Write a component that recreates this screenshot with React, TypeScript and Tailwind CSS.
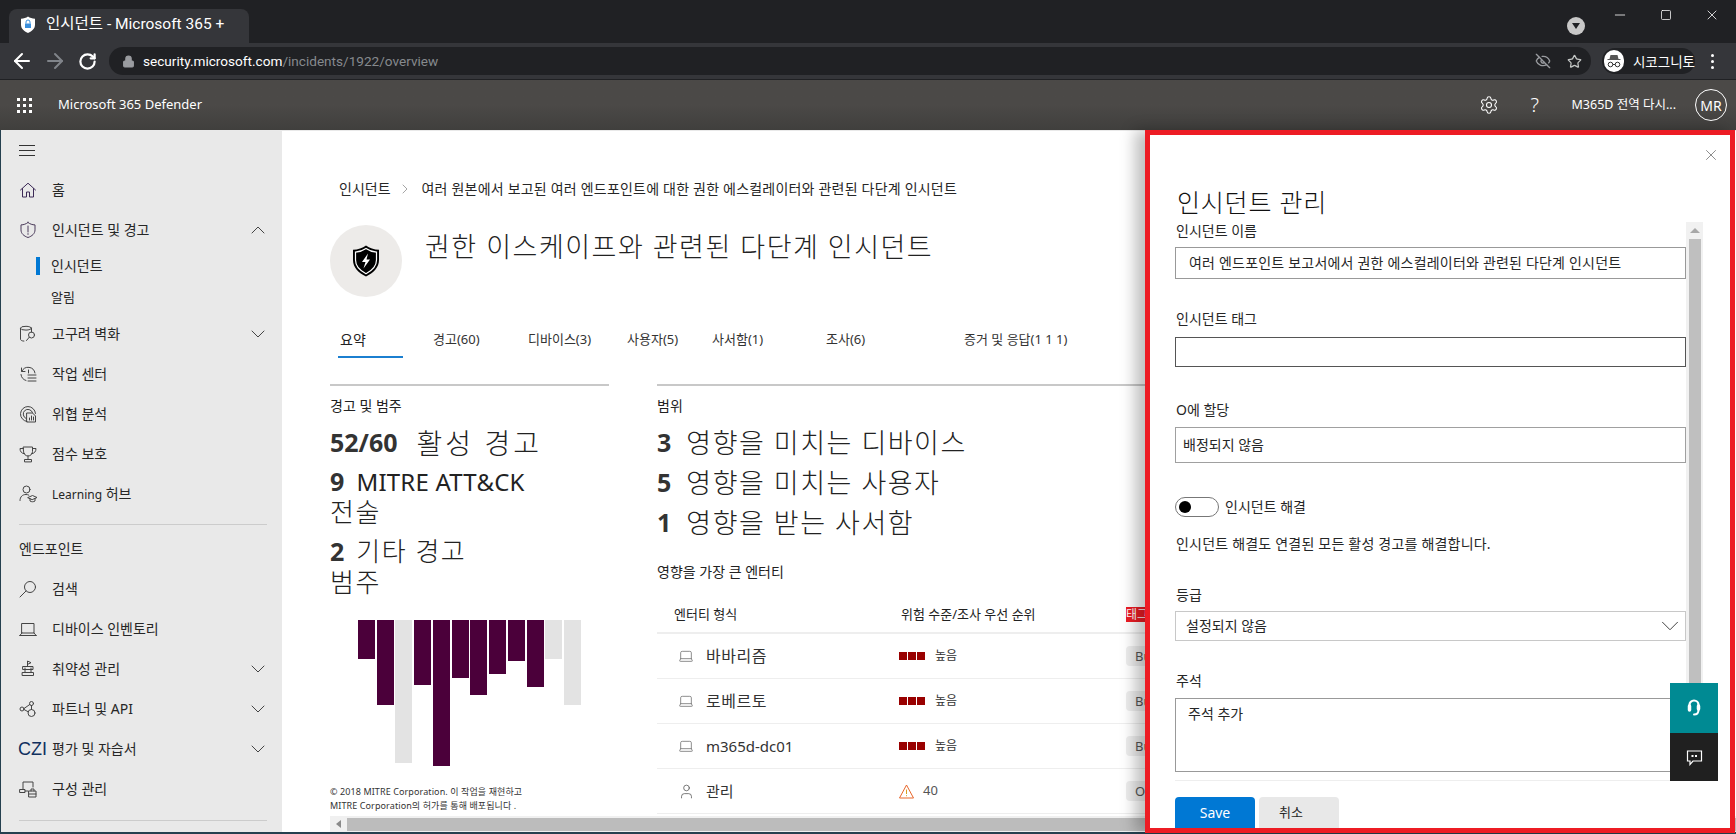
import React from "react";
import { ChevronDown, ChevronUp, ChevronRight, ArrowLeft, ArrowRight, RotateCw, Lock, EyeOff, Star, Settings, X, Minus, Square, Laptop, User } from "lucide-react";

const I = ({ children, s = 18 }: { children: React.ReactNode; s?: number }) => (
  <svg width={s} height={s} viewBox="0 0 18 18" fill="none" stroke="#444" strokeWidth="1" strokeLinecap="round" strokeLinejoin="round">{children}</svg>
);

const icons: Record<string, React.ReactNode> = {
  home: <I><path d="M1.500 9 9 2.200 16.500 9" stroke="#3d2a57" /><path d="M3.500 7.500V16h4v-5h3v5h4V7.500" stroke="#3d2a57" /></I>,
  shield: <I><path d="M9 1.500c2 1.600 4.300 2.300 7 2.400v5c0 3.600-2.800 6.200-7 7.600-4.200-1.400-7-4-7-7.600v-5c2.700-.1 5-.8 7-2.400Z" stroke="#4a3a5a" /><path d="M9 5v6M9 12.600v.8" stroke="#4a3a5a" /></I>,
  db: <I><ellipse cx="7" cy="3.200" rx="5.500" ry="1.900" /><path d="M1.500 3.200v11c0 1 1.300 1.800 3.400 1.900M12.500 3.200v4" /><circle cx="12.500" cy="10" r="3" /><path d="M10.300 12.200 7.500 15.500" /></I>,
  history: <I><path d="M2.500 3v3.500H6" /><path d="M2.800 6.300A7 7 0 0 1 16 8" /><path d="M2 9.500a7 7 0 0 0 5 6" /><path d="M9 10h8M9 13h8M9 16h8M9.500 5v3" /></I>,
  radar: <I><path d="M8 16.500a7.500 7.500 0 1 1 8.500-8" /><path d="M7 13.500a4.800 4.800 0 1 1 6.500-6" /><path d="M8 8h5.500l3 3v6H8Z" /><path d="M10.500 15v-2M12.500 15v-4M14.500 15v-3" /></I>,
  trophy: <I><path d="M4.500 2h9v4.500a4.500 4.500 0 0 1-9 0Z" /><path d="M4.500 3.500H1c0 3 1.500 5 4.500 5.300M13.500 3.500H17c0 3-1.500 5-4.500 5.300M9 11v3M5.500 16.500v-2h7v2Z" /></I>,
  learn: <I><circle cx="7.500" cy="4.500" r="3.500" /><path d="M1 15.500c0-3.800 2.500-6 6-6 1 0 2 .2 2.800.6" /><path d="m9 12.500 4.500-2 4.500 2-4.500 2Z" /><path d="M11 13.500V16c1.500 1 3.500 1 5 0v-2.500" /></I>,
  search: <I><circle cx="11" cy="7" r="5.500" /><path d="M7 11 1 17" /></I>,
  laptop: <I><path d="M3 3.500h12v9.500H3ZM.8 15.500h16.400M.8 15.500 3 13M17.200 15.500 15 13" /></I>,
  vuln: <I><path d="M8.500 6V1l3.500 1.700L8.500 4.400" /><path d="M4 6.500h10v3H4ZM6 9.500v3M12 9.500v3M3.500 12.500h11v3h-11ZM6 8v1M12 8v1" /></I>,
  api: <I><circle cx="3" cy="9" r="2" /><circle cx="12.500" cy="3.500" r="2" /><circle cx="12.500" cy="13" r="3.500" /><path d="M5 8.500 10.800 4.500M5 9.500l4.200 2.300M12.500 5.500v4" /></I>,
  config: <I><path d="M4 9V2h10v5" /><path d="M1 9.500h5v3H1ZM6 11h3M10 11h7v6h-7ZM12 11V9h3v2M10 14h7" /></I>,
};

const Nav = ({ icon, label, chev }: { icon?: string; label: React.ReactNode; chev?: "up" | "down" }) => (
  <div className="h-10 flex items-center pl-[18px] pr-[12px]">
    <div className="w-[33px] shrink-0 flex items-center">
      {icon === "czi" ? <span className="font-['Liberation_Sans',sans-serif] text-[18px] text-[#10305e] -ml-[1px]">CZI</span> : icon ? icons[icon] : null}
    </div>
    <span className="flex-1 text-sm text-[#262626] whitespace-nowrap">{label}</span>
    {chev === "down" && <ChevronDown size={24} strokeWidth={1} className="text-[#444]" />}
    {chev === "up" && <ChevronUp size={24} strokeWidth={1} className="text-[#444]" />}
  </div>
);

const Risk = () => (
  <div className="flex items-center">
    <div className="flex gap-[1px] mr-[10px]">
      <div className="w-2 h-2 bg-[#990000]" /><div className="w-2 h-2 bg-[#990000]" /><div className="w-2 h-2 bg-[#990000]" />
    </div>
    <span className="text-[12px] text-[#333]">높음</span>
  </div>
);

const Row = ({ name, icon, risk, tag, wide }: { name: string; icon: React.ReactNode; risk: React.ReactNode; tag: string; wide?: boolean }) => (
  <div className="h-[45px] flex items-center border-b border-[#eeeeee]">
    <div className="w-[242px] flex items-center pl-[21px]">
      <div className="w-[28px]">{icon}</div>
      <span className={wide ? "text-[16px] tracking-[0.5px] text-[#333] whitespace-nowrap" : "text-[15px] text-[#333] whitespace-nowrap"}>{name}</span>
    </div>
    <div className="w-[227px]">{risk}</div>
    <div className="w-[40px] h-5 bg-[#eeeeee] rounded-sm text-[13px] text-[#555] pl-[9px] leading-5 shrink-0">{tag}</div>
  </div>
);

const BigLine = ({ n, t, first }: { n: string; t: string; first?: boolean }) => (
  <div className="h-10 flex items-center whitespace-nowrap">
    <span className={first ? "text-[25px] font-bold text-[#333] mr-[19px]" : "text-[25px] font-bold text-[#333] mr-[15px]"}>{n}</span>
    <span className={first ? "text-[28px] text-[#222] tracking-[3px] font-light" : "text-[27px] text-[#222] tracking-[1.5px] font-light"}>{t}</span>
  </div>
);

const bars = [
  [358, 39, 1], [377, 85, 1], [395, 143, 0], [414, 65, 1], [433, 146, 1], [452, 58, 1],
  [470, 75, 1], [489, 54, 1], [508, 41, 1], [527, 67, 1], [545, 39, 0], [564, 85, 0],
];

export default function App() {
  return (
    <div className="w-[1736px] h-[834px] relative overflow-hidden flex flex-col bg-[#25404f] font-['Noto_Sans','Noto_Sans_CJK_KR',sans-serif]">
      {/* Chrome tabs */}
      <div className="h-[43px] bg-[#202124] flex shrink-0 items-end pl-[9px] font-['Roboto','Noto_Sans_CJK_KR',sans-serif]">
        <div className="w-[240px] h-[34px] bg-[#35363a] rounded-t-lg flex items-center pl-[11px] pb-[2px]">
          <svg width="16" height="18" viewBox="0 0 16 18"><path d="M8 .5c2 1.400 4.200 2 7 2.200v6c0 3.800-2.800 6.400-7 8.300C3.800 15.100 1 12.500 1 8.700v-6C3.800 2.500 6 1.900 8 .5Z" fill="#fff" /><path d="M5 7.500h6V12H5Z" fill="#3a8fdc" /><path d="M6 7.500V6a2 2 0 0 1 4 0v1.500" stroke="#3a8fdc" fill="none" /></svg>
          <span className="ml-[10px] text-[15.500px] text-white whitespace-nowrap">인시던트 - Microsoft 365 +</span>
        </div>
        <div className="flex-1 h-full relative">
          <div className="absolute left-[1318px] top-[17px] w-[18px] h-[18px] rounded-full bg-[#c8c8c8] flex items-center justify-center"><div className="w-0 h-0 border-l-[4px] border-r-[4px] border-t-[6px] border-l-transparent border-r-transparent border-t-[#202124]" /></div>
          <Minus size={16} strokeWidth={1.200} className="absolute left-[1363px] top-[7px] text-white" />
          <Square size={12} strokeWidth={1.500} className="absolute left-[1411px] top-[9px] text-white" />
          <X size={16} strokeWidth={1.200} className="absolute left-[1455px] top-[7px] text-white" />
        </div>
      </div>
      {/* Chrome toolbar */}
      <div className="h-[37px] bg-[#35363a] shrink-0 flex items-center border-b border-[#202124] font-['Roboto',sans-serif]">
        <ArrowLeft size={24} strokeWidth={2} className="ml-[10px] text-white" />
        <ArrowRight size={24} strokeWidth={2} className="ml-[9px] text-[#80848a]" />
        <RotateCw size={19} strokeWidth={2.800} className="ml-[11px] text-white" />
        <div className="ml-[12px] w-[1482px] h-[28px] rounded-full bg-[#202124] flex items-center pl-[13px]">
          <Lock size={13} className="text-[#9a9ca0]" fill="#9a9ca0" />
          <span className="ml-[8px] text-[13.6px]"><span className="text-white">security.microsoft.com</span><span className="text-[#868a8e]">/incidents/1922/overview</span></span>
          <div className="flex-1" />
          <EyeOff size={16} strokeWidth={2} className="text-[#9a9ca0]" />
          <Star size={15} strokeWidth={2} className="ml-[16px] mr-[9px] text-[#c4c7c5]" />
        </div>
        <div className="ml-[11px] w-[93px] h-[26px] rounded-full bg-[#202124] flex items-center pl-[2px]">
          <div className="w-[22px] h-[22px] rounded-full bg-white flex items-center justify-center">
            <svg width="16" height="14" viewBox="0 0 16 14" fill="#555"><path d="M4.500 1h7l1 4h2v1H1.500V5h2Z" /><circle cx="4.500" cy="10.500" r="2.300" fill="none" stroke="#333" /><circle cx="11.500" cy="10.500" r="2.300" fill="none" stroke="#333" /><path d="M6.800 10.500h2.400" stroke="#333" /></svg>
          </div>
          <span className="ml-[9px] text-[13.5px] text-white whitespace-nowrap font-['Noto_Sans_CJK_KR',sans-serif]">시코그니토</span>
        </div>
        <div className="ml-[16px] flex flex-col gap-[3px]">
          <div className="w-[3px] h-[3px] rounded-full bg-white" /><div className="w-[3px] h-[3px] rounded-full bg-white" /><div className="w-[3px] h-[3px] rounded-full bg-white" />
        </div>
      </div>
      {/* Defender header */}
      <div className="h-[50px] shrink-0 bg-gradient-to-b from-[#4b4947] via-[#4b4947] to-[#403f3d] flex items-center pl-[17px] pr-[9px] text-white">
        <div className="grid grid-cols-3 gap-[3px]">
          {Array.from({ length: 9 }).map((_, i) => <div key={i} className="w-[3px] h-[3px] bg-white" />)}
        </div>
        <span className="ml-[26px] text-[13px] whitespace-nowrap">Microsoft 365 Defender</span>
        <div className="flex-1" />
        <Settings size={20} strokeWidth={1.300} />
        <span className="ml-[32px] w-[14px] text-[20px] font-light leading-none">?</span>
        <span className="ml-[27px] text-[12.500px] whitespace-nowrap">M365D 전역 다시...</span>
        <div className="ml-[19px] w-8 h-8 rounded-full border border-white flex items-center justify-center text-[14px]">MR</div>
      </div>
      {/* Body */}
      <div className="flex-1 flex ml-[1px] mb-[2px] min-h-0">
        <aside className="w-[281px] shrink-0 bg-[#e9e9e9] overflow-hidden pt-[1px]">
          <div className="h-[39px] flex items-center pl-[18px]">
            <div className="w-[16px] flex flex-col gap-[4px]"><div className="h-px bg-[#333]" /><div className="h-px bg-[#333]" /><div className="h-px bg-[#333]" /></div>
          </div>
          <Nav icon="home" label="홈" />
          <Nav icon="shield" label="인시던트 및 경고" chev="up" />
          <div className="h-[31px] flex items-center relative pl-[50px]">
            <div className="absolute left-[35px] top-[7px] w-1 h-[18px] bg-[#0078d4]" />
            <span className="text-sm text-[#262626]">인시던트</span>
          </div>
          <div className="h-[33px] flex items-center pl-[50px] text-[13px] text-[#262626]">알림</div>
          <Nav icon="db" label="고구려 벽화" chev="down" />
          <Nav icon="history" label="작업 센터" />
          <Nav icon="radar" label="위협 분석" />
          <Nav icon="trophy" label="점수 보호" />
          <Nav icon="learn" label={<><span className="text-[12px]">Learning</span> 허브</>} />
          <div className="mt-[10px] ml-[18px] w-[248px] h-px bg-[#cccccc]" />
          <div className="mt-[4px] h-10 flex items-center pl-[18px] text-sm text-[#262626]">엔드포인트</div>
          <Nav icon="search" label="검색" />
          <Nav icon="laptop" label="디바이스 인벤토리" />
          <Nav icon="vuln" label="취약성 관리" chev="down" />
          <Nav icon="api" label="파트너 및 API" chev="down" />
          <Nav icon="czi" label="평가 및 자습서" chev="down" />
          <Nav icon="config" label="구성 관리" />
          <div className="mt-[11px] ml-[18px] w-[248px] h-px bg-[#cccccc]" />
        </aside>
        <main className="flex-1 min-w-0 bg-white flex flex-col overflow-hidden border-t border-[#e9e9e9]">
          <div className="flex-1 min-h-0 overflow-hidden pl-[48px]">
            <div className="flex items-center mt-[48px] ml-[9px] h-[20px] text-sm text-[#262626] whitespace-nowrap">
              <span>인시던트</span>
              <ChevronRight size={16} strokeWidth={1} className="mx-[6px] text-[#777]" />
              <span className="ml-[3px] tracking-[0.2px]">여러 원본에서 보고된 여러 엔드포인트에 대한 권한 에스컬레이터와 관련된 다단계 인시던트</span>
            </div>
            <div className="flex mt-[26px] h-[72px]">
              <div className="w-[72px] h-[72px] rounded-full bg-[#edebe9] flex items-center justify-center">
                <svg width="28" height="32" viewBox="0 0 28 32"><path d="M14 .5c3.500 2.700 8 4 13 4.300V15c0 7.500-5.500 12.800-13 16.500C6.500 27.800 1 22.500 1 15V4.800C6 4.500 10.500 3.200 14 .5Z" fill="#000" /><path d="M14 3.500c3 2.200 6.800 3.300 10.500 3.600V15c0 6-4.300 10.500-10.500 13.700C7.800 25.500 3.500 21 3.500 15V7.100C7.200 6.800 11 5.700 14 3.500Z" fill="none" stroke="#fff" strokeWidth="1.200" /><path d="M16 8.500 10 17h3.500L11.500 23.500 18 14.500h-3.500Z" fill="#fff" /></svg>
              </div>
              <h1 className="ml-[23px] -mt-[1px] h-[46px] leading-[46px] text-[27px] font-light text-[#222] tracking-[1.5px] whitespace-nowrap">권한 이스케이프와 관련된 다단계 인시던트</h1>
            </div>
            <div className="relative h-[48px] mt-[13px] ml-[8px] text-[13px] text-[#333] whitespace-nowrap flex items-start pt-[20px]">
              <div className="w-[65px] pl-[2px] text-[#222] text-sm relative h-[28px]">요약<div className="absolute left-0 right-0 bottom-0 h-[2px] bg-[#1b7fd0]" /></div>
              <span className="ml-[30px] w-[95px]">경고(60)</span>
              <span className="w-[99px]">디바이스(3)</span>
              <span className="w-[85px]">사용자(5)</span>
              <span className="w-[114px]">사서함(1)</span>
              <span className="w-[138px]">조사(6)</span>
              <span>증거 및 응답(1 1 1)</span>
            </div>
            <div className="flex mt-[26px] gap-[48px]">
              <section className="w-[279px] shrink-0 border-t-2 border-[#c8c8c8]">
                <div className="mt-[12px] h-4 leading-4 text-sm text-[#222]">경고 및 범주</div>
                <div className="mt-[9px]"><BigLine n="52/60" t="활성 경고" first /></div>
                <div className="mt-[3px] text-[#222] font-light">
                  <div className="h-[31px] flex items-center whitespace-nowrap tracking-[0.2px]"><span className="inline-block h-[31px] leading-[31px] text-[25px] font-bold text-[#333] mr-[12px]">9</span><span className="inline-block h-[31px] leading-[31px] text-[24px] font-normal">MITRE ATT&amp;CK</span></div>
                  <div className="h-[31px]"><span className="inline-block align-top h-[31px] leading-[31px] text-[26px] tracking-[1.5px]">전술</span></div>
                  <div className="h-[31px] mt-[8px] flex items-center whitespace-nowrap"><span className="inline-block h-[31px] leading-[31px] text-[25px] font-bold text-[#333] mr-[12px]">2</span><span className="inline-block h-[31px] leading-[31px] text-[26px] tracking-[1.5px]">기타 경고</span></div>
                  <div className="h-[31px]"><span className="inline-block align-top h-[31px] leading-[31px] text-[26px] tracking-[1.5px]">범주</span></div>
                </div>
                <svg width="279" height="150" className="mt-[22px]">
                  {bars.map(([x, h, p]) => <rect key={x} x={x - 330} y="0" width="17" height={h} fill={p ? "#4b003a" : "#e3e3e3"} />)}
                </svg>
                <div className="mt-[15px] text-[9px] leading-[14px] text-[#333] whitespace-nowrap tracking-[0.1px]">
                  <div>© 2018 MITRE Corporation. 이 작업을 재현하고</div>
                  <div>MITRE Corporation의 허가를 통해 배포됩니다 .</div>
                </div>
              </section>
              <section className="w-[520px] shrink-0 border-t-2 border-[#c8c8c8]">
                <div className="mt-[12px] h-4 leading-4 text-sm text-[#222]">범위</div>
                <div className="mt-[9px]">
                  <BigLine n="3" t="영향을 미치는 디바이스" />
                  <BigLine n="5" t="영향을 미치는 사용자" />
                  <BigLine n="1" t="영향을 받는 사서함" />
                </div>
                <div className="mt-[21px] h-4 leading-4 text-sm text-[#222]">영향을 가장 큰 엔터티</div>
                <div className="mt-[17px] h-[37px] flex items-center border-b-2 border-[#eeeeee] text-[13px] text-[#222]">
                  <div className="w-[242px] pl-[17px]">엔터티 형식</div>
                  <div className="w-[227px] pl-[2px]">위험 수준/조사 우선 순위</div>
                  <div className="bg-[#ed1c24] text-white text-[12px] leading-[15px] w-[24px] whitespace-nowrap">태그</div>
                </div>
                <Row name="바바리즘" wide icon={<Laptop size={16} strokeWidth={1} className="text-[#555]" />} risk={<Risk />} tag="Bu" />
                <Row name="로베르토" wide icon={<Laptop size={16} strokeWidth={1} className="text-[#555]" />} risk={<Risk />} tag="Bu" />
                <Row name="m365d-dc01" icon={<Laptop size={16} strokeWidth={1} className="text-[#555]" />} risk={<Risk />} tag="Bu" />
                <Row name="관리" icon={<User size={17} strokeWidth={1} className="text-[#444]" />} risk={
                  <div className="flex items-center gap-[9px]">
                    <svg width="15" height="15" viewBox="0 0 15 15" fill="none"><path d="M7.500 1 14.500 14H.5Z" stroke="#e8662a" /><path d="M7.500 5.500v4.500M7.500 11.200v1" stroke="#d8a020" /></svg>
                    <span className="text-[13px] text-[#555]">40</span>
                  </div>
                } tag="O" />
              </section>
            </div>
          </div>
          <div className="h-4 ml-[48px] bg-[#f0f0f0] flex items-center shrink-0">
            <div className="w-[17px] flex justify-center"><div className="w-0 h-0 border-y-[4px] border-r-[5px] border-y-transparent border-r-[#8a8a8a]" /></div>
            <div className="flex-1 h-[13px] bg-[#bcbcbc]" />
          </div>
        </main>
      </div>

      {/* Side panel overlay */}
      <div className="absolute left-[1145px] top-[130px] w-[590px] h-[703px] bg-white border-[5px] border-[#ed1c24] shadow-[-10px_0_14px_rgba(0,0,0,0.25)] pl-[25px] flex flex-col overflow-hidden text-[#262626]">
        <X size={18} strokeWidth={0.900} className="absolute right-[10px] top-[11px] text-[#555]" />
        <h2 className="mt-[51px] ml-[2px] h-8 leading-8 text-[25px] font-light text-[#111] tracking-[0.8px] whitespace-nowrap">인시던트 관리</h2>
        <div className="flex mt-[4px] flex-1 min-h-0">
          <div className="w-[511px] shrink-0 flex flex-col text-sm">
            <div className="mt-[1px] h-4 leading-4 pl-[1px]">인시던트 이름</div>
            <div className="mt-[8px] h-8 border border-[#999] flex items-center pl-[13px] whitespace-nowrap tracking-[0.2px]">여러 엔드포인트 보고서에서 권한 에스컬레이터와 관련된 다단계 인시던트</div>
            <div className="mt-[32px] h-4 leading-4 pl-[1px]">인시던트 태그</div>
            <div className="mt-[10px] h-[30px] border border-[#555]" />
            <div className="mt-[35px] h-4 leading-4 pl-[1px]">O에 할당</div>
            <div className="mt-[9px] h-9 border border-[#a0a0a0] flex items-center pl-[7px]">배정되지 않음</div>
            <div className="mt-[34px] h-5 flex items-center">
              <div className="w-[44px] h-5 rounded-full border border-[#777] flex items-center pl-[3px]"><div className="w-3 h-3 rounded-full bg-black" /></div>
              <span className="ml-[6px]">인시던트 해결</span>
            </div>
            <div className="mt-[19px] h-4 leading-4 pl-[1px] whitespace-nowrap tracking-[0.2px]">인시던트 해결도 연결된 모든 활성 경고를 해결합니다.</div>
            <div className="mt-[35px] h-4 leading-4 pl-[1px]">등급</div>
            <div className="mt-[8px] h-[30px] border border-[#c8c8c8] flex items-center pl-[10px]">
              <span className="flex-1">설정되지 않음</span>
              <ChevronDown size={30} strokeWidth={0.800} className="text-[#444]" />
            </div>
            <div className="mt-[32px] h-4 leading-4 pl-[1px]">주석</div>
            <div className="mt-[9px] h-[74px] border border-[#999] pl-[12px] pt-[7px] leading-4">주석 추가</div>
            <div className="mt-[8px] h-px bg-[#eeeeee]" />
            <div className="mt-[16px] flex gap-[4px] text-sm">
              <div className="w-[80px] h-[31px] bg-[#0078d4] text-white flex items-center justify-center rounded-t-sm">Save</div>
              <div className="w-[80px] h-[31px] bg-[#e8e8e8] flex items-center pl-[20px] text-[13px] rounded-t-sm">취소</div>
            </div>
          </div>
          <div className="w-[17px] h-[558px] bg-[#f1f1f1] flex flex-col items-center shrink-0">
            <div className="h-[17px] flex items-center"><div className="w-0 h-0 border-x-[5px] border-b-[5px] border-x-transparent border-b-[#a8a8a8]" /></div>
            <div className="w-[12px] flex-1 bg-[#bfbfbf]" />
          </div>
        </div>
        <div className="absolute left-[520px] top-[548px] w-[48px] flex flex-col">
          <div className="h-[50px] bg-[#008a93] flex items-center justify-center">
            <svg width="14" height="18" viewBox="0 0 14 18" fill="none" stroke="#fff" strokeLinecap="round"><path d="M2.500 10V6a4.500 4.500 0 0 1 9 0v4" strokeWidth="2.200" /><path d="M2.500 7v4M11.500 7v3" strokeWidth="3.500" /><path d="M11.500 11c0 2.500-1.500 4.500-4.500 4.500" strokeWidth="2" /></svg>
          </div>
          <div className="h-[48px] bg-[#202020] flex items-center justify-center">
            <svg width="17" height="17" viewBox="0 0 17 17" fill="none" stroke="#fff" strokeWidth="1.200"><path d="M1.500 2h14v10H7l-3 3.500V12H1.500Z" /><path d="M5.500 6h2v2h-2ZM9 6h2v2H9Z" fill="#fff" strokeWidth="0" /></svg>
          </div>
        </div>
      </div>
    </div>
  );
}
